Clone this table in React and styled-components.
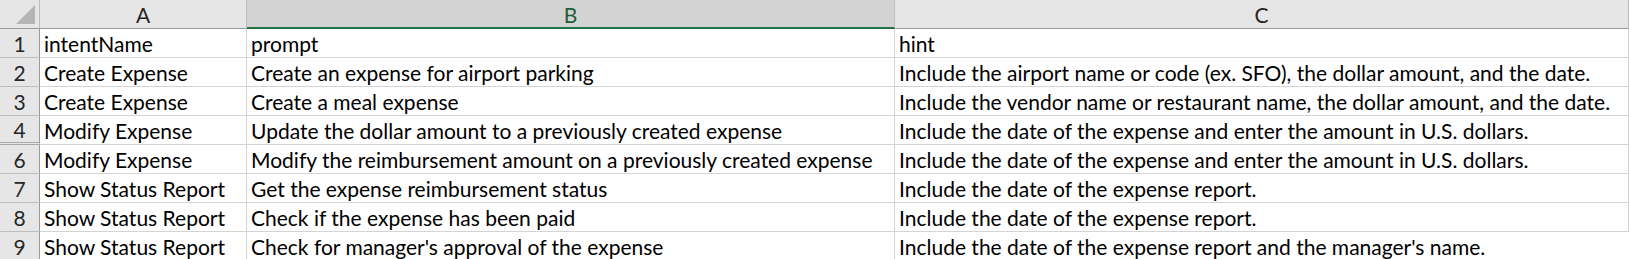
import React from 'react'
import styled, { createGlobalStyle } from 'styled-components'

const GlobalStyle = createGlobalStyle`
  html, body {
    margin: 0;
    padding: 0;
    background: #ffffff;
  }
  body {
    font-family: Lato, "Open Sans", "Liberation Sans", sans-serif;
  }
`

const rows = [
  { num: '1', a: 'intentName', b: 'prompt', c: 'hint' },
  { num: '2', a: 'Create Expense', b: 'Create an expense for airport parking', c: 'Include the airport name or code (ex. SFO), the dollar amount, and the date.' },
  { num: '3', a: 'Create Expense', b: 'Create a meal expense', c: 'Include the vendor name or restaurant name, the dollar amount, and the date.' },
  { num: '4', a: 'Modify Expense', b: 'Update the dollar amount to a previously created expense', c: 'Include the date of the expense and enter the amount in U.S. dollars.', hiddenAfter: true },
  { num: '6', a: 'Modify Expense', b: 'Modify the reimbursement amount on a previously created expense', c: 'Include the date of the expense and enter the amount in U.S. dollars.' },
  { num: '7', a: 'Show Status Report', b: 'Get the expense reimbursement status', c: 'Include the date of the expense report.' },
  { num: '8', a: 'Show Status Report', b: 'Check if the expense has been paid', c: 'Include the date of the expense report.' },
  { num: '9', a: 'Show Status Report', b: "Check for manager's approval of the expense", c: "Include the date of the expense report and the manager's name." },
]

const Sheet = styled.div`
  display: grid;
  grid-template-columns: 40px 207px 648px 1fr;
  width: 1629px;
  height: 259px;
  overflow: hidden;
  font-family: Lato, "Open Sans", "Liberation Sans", sans-serif;
  font-size: 21px;
  color: #000;
`

const Corner = styled.div`
  position: relative;
  height: 29px;
  box-sizing: border-box;
  background: #e6e6e6;
  border-right: 1px solid #bdbdbd;
  border-bottom: 1px solid #9b9b9b;

  &::after {
    content: '';
    position: absolute;
    right: 4px;
    bottom: 4px;
    width: 0;
    height: 0;
    border-left: 19px solid transparent;
    border-bottom: 19px solid #b5b5b5;
  }
`

const ColHead = styled.div`
  display: flex;
  align-items: center;
  justify-content: center;
  height: 29px;
  box-sizing: border-box;
  background: ${p => (p.$selected ? '#d3d3d3' : '#e6e6e6')};
  color: ${p => (p.$selected ? '#1e5e3a' : '#262626')};
  border-right: 1px solid #bdbdbd;
  border-bottom: ${p => (p.$selected ? '2px solid #217346' : '1px solid #9b9b9b')};
  padding-top: ${p => (p.$selected ? '1px' : '0')};
  &:last-child {
    border-right: none;
  }
`

const RowHead = styled.div`
  display: flex;
  align-items: center;
  justify-content: center;
  height: 29px;
  box-sizing: border-box;
  background: #e6e6e6;
  color: #262626;
  border-right: 1px solid #9b9b9b;
  border-bottom: ${p => (p.$hiddenAfter ? '3px double #a8a8a8' : '1px solid #bdbdbd')};
`

const Cell = styled.div`
  display: flex;
  align-items: center;
  height: 29px;
  box-sizing: border-box;
  padding: 1px 4px 0;
  white-space: nowrap;
  overflow: hidden;
  border-right: 1px solid #d4d4d4;
  border-bottom: 1px solid #d4d4d4;
  &:last-child {
    border-right: none;
  }
`

export default function App() {
  return (
    <>
      <GlobalStyle />
      <Sheet>
        <Corner />
        <ColHead>A</ColHead>
        <ColHead $selected>B</ColHead>
        <ColHead>C</ColHead>
        {rows.map(r => (
          <React.Fragment key={r.num}>
            <RowHead $hiddenAfter={r.hiddenAfter}>{r.num}</RowHead>
            <Cell>{r.a}</Cell>
            <Cell>{r.b}</Cell>
            <Cell>{r.c}</Cell>
          </React.Fragment>
        ))}
      </Sheet>
    </>
  )
}
